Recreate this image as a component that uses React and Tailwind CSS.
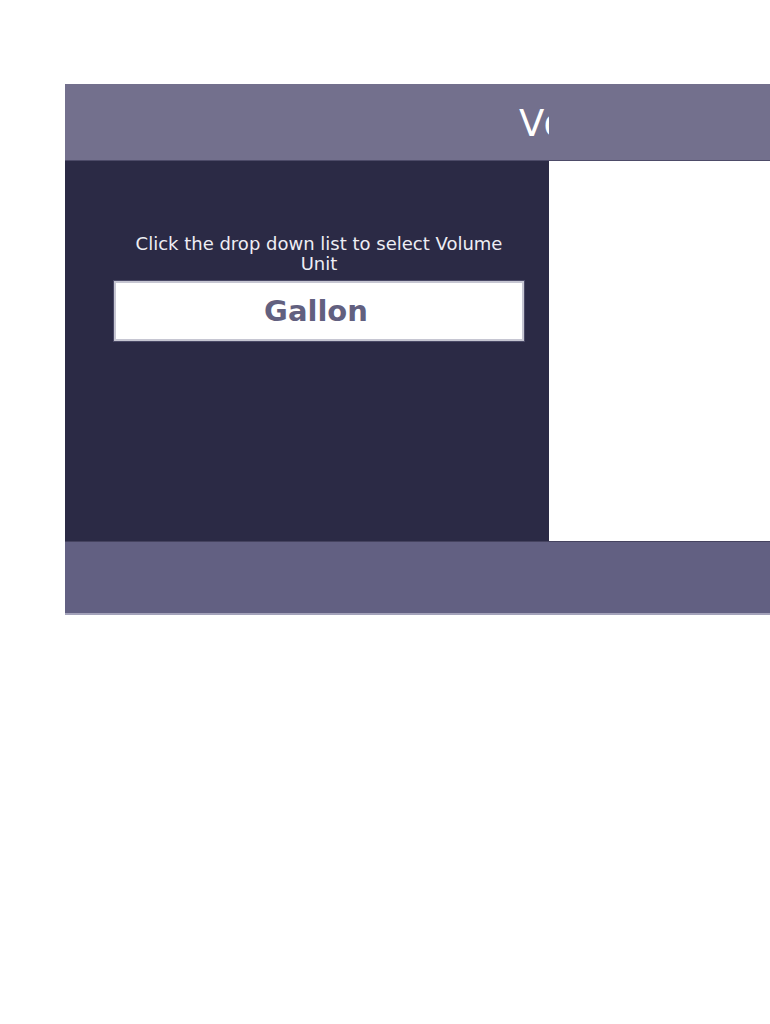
import React from 'react';

// Volume converter sheet, clipped the same way the exported page is.
export default function App() {
  return (
    <div className="min-h-screen bg-white pt-[84px] pl-[65px]" style={{ fontFamily: '"DejaVu Sans", Verdana, sans-serif' }}>
      {/* Title bar */}
      <div className="h-[77px] bg-[#73708d] border-b border-[#4d4b68]">
        <div className="w-[484px] h-full overflow-hidden">
          <div className="pl-[454px] pt-[21px] whitespace-nowrap text-[37px] leading-none tracking-[2px] text-white">
            Volume Converter
          </div>
        </div>
      </div>

      {/* Body */}
      <div className="flex h-[380px]">
        <div className="w-[484px] bg-[#2b2a45] pt-[73px]">
          <div className="ml-[48px] w-[412px]">
            <p className="px-[10px] text-center text-[18px] leading-[20px] text-[#eeeef4]">
              Click the drop down list to select Volume Unit
            </p>
            <div className="mt-[6px] border border-[#4a4966]">
              <div className="h-[60px] border-2 border-[#c6c6d2] bg-white flex items-center justify-center">
                <span className="text-[29px] leading-none font-bold text-[#62607f] -ml-[6px]">Gallon</span>
              </div>
            </div>
          </div>
        </div>
        <div className="flex-1 bg-white" />
      </div>

      {/* Footer bar */}
      <div className="h-[74px] bg-[#626082] border-t border-[#45435f] border-b-2 border-b-[#a3a2ba]" />
    </div>
  );
}
